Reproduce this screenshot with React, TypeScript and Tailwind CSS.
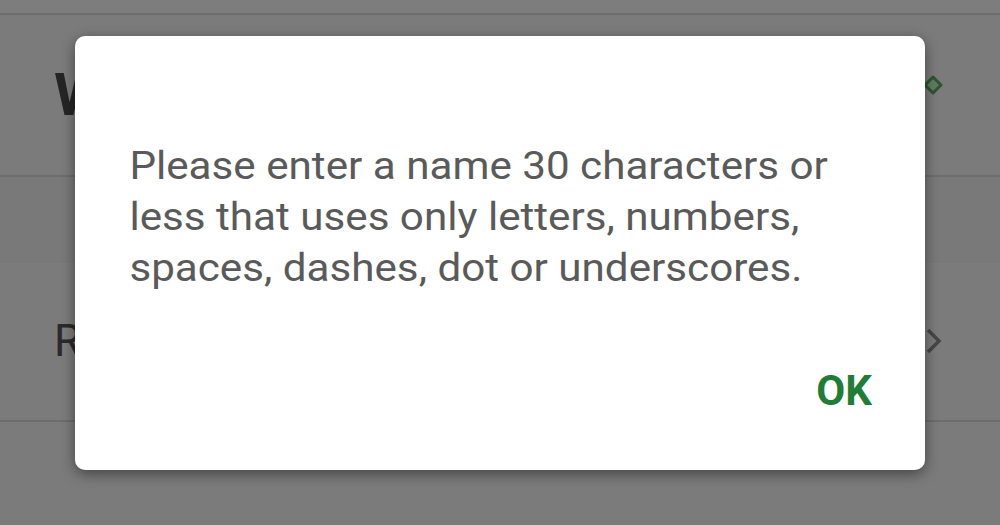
export default function App() {
  return (
    <div className="relative h-[525px] w-[1000px] overflow-hidden bg-[#7b7b7b] font-['Roboto',sans-serif]">
      {/* dimmed settings screen behind the dialog */}
      <div className="flex flex-col">
        <div className="h-[15px] border-b-2 border-[#6c6c6c] bg-[#7d7d7d]" />
        <div className="flex h-[162px] items-center justify-between border-b-2 border-[#6d6d6d] pl-[54px] pr-[56px]">
          <span className="text-[60px] font-bold leading-none text-[#252525]">W</span>
          <svg width="22" height="22" viewBox="0 0 22 22" className="mt-[-20px]">
            <path d="M11 3 L19 11 L11 19 L3 11 Z" fill="#5f7d60" stroke="#2e5431" strokeWidth="3" strokeLinejoin="round" />
          </svg>
        </div>
        <div className="h-[85px] border-b border-[#757575] bg-[#797979]" />
        <div className="flex h-[160px] items-center justify-between border-b-2 border-[#6d6d6d] pl-[54px] pr-[58px]">
          <span className="text-[44px] leading-none text-[#2a2a2a]">R</span>
          <svg width="16" height="26" viewBox="0 0 16 26">
            <path d="M2 2 L13 13 L2 24" fill="none" stroke="#464646" strokeWidth="3.5" />
          </svg>
        </div>
      </div>

      {/* alert dialog */}
      <div className="absolute left-[75px] top-[36px] flex h-[434px] w-[850px] flex-col rounded-[10px] bg-white shadow-[0_4px_14px_rgba(0,0,0,0.45)]">
        <p className="origin-left scale-x-[1.11] whitespace-nowrap pl-[49px] pt-[105px] text-[38px] leading-[51px] text-[#5a5a5a]">
          Please enter a name 30 characters or
          <br />
          less that uses only letters, numbers,
          <br />
          spaces, dashes, dot or underscores.
        </p>
        <div className="mt-auto flex justify-end pb-[58px] pr-[53px]">
          <button className="text-[42px] font-bold leading-none text-[#1f7d36]">OK</button>
        </div>
      </div>
    </div>
  );
}
